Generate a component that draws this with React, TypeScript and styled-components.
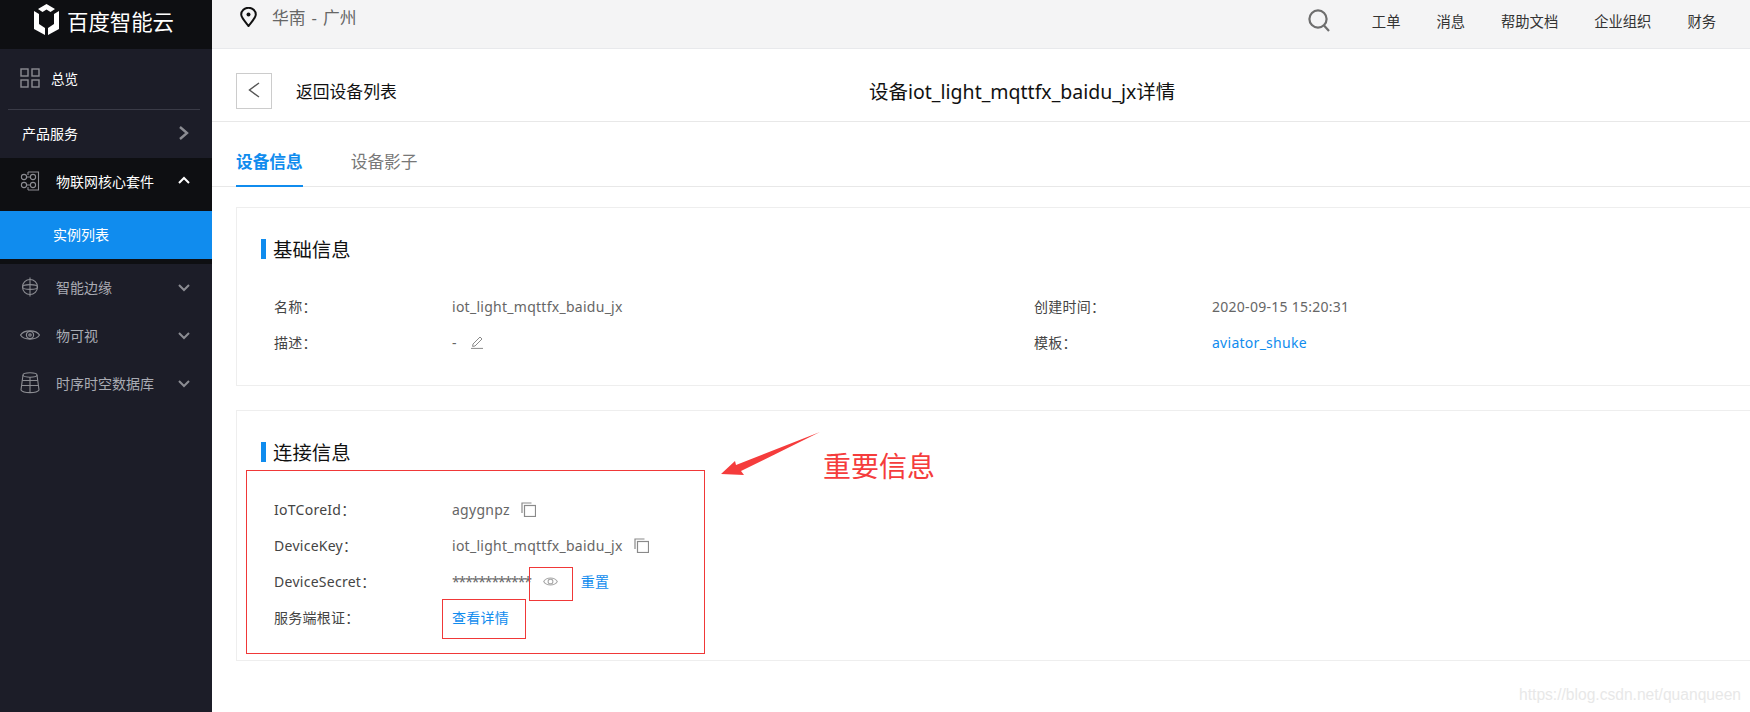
import React from 'react';
import styled, { createGlobalStyle } from 'styled-components';

const FONT = '"Noto Sans", "Noto Sans CJK SC", sans-serif';

const GlobalStyle = createGlobalStyle`
  html, body {
    margin: 0;
    padding: 0;
    background: #ffffff;
  }
  body {
    font-family: ${FONT};
  }
  * {
    box-sizing: border-box;
  }
`;

const Page = styled.div`
  position: relative;
  display: flex;
  width: 1750px;
  height: 712px;
  overflow: hidden;
  background: #ffffff;
`;

/* sidebar */
const Sidebar = styled.aside`
  flex: 0 0 212px;
  display: flex;
  flex-direction: column;
  background: #1c1d28;
`;

const LogoBar = styled.div`
  display: flex;
  align-items: center;
  gap: 6px;
  height: 49px;
  padding: 0 0 9px 32px;
  background: #0e0f12;
  color: #ffffff;
  font-size: 21.4px;
  font-weight: 400;
`;

const OverviewRow = styled.div`
  display: flex;
  align-items: center;
  gap: 11px;
  height: 60px;
  padding: 0 0 2px 20px;
  color: #ffffff;
  font-size: 13.5px;
`;

const Divider = styled.div`
  height: 1px;
  margin: 0 12px 0 8px;
  background: #3a3b47;
`;

const ServiceRow = styled.div`
  display: flex;
  align-items: center;
  justify-content: space-between;
  height: 48px;
  padding: 0 22px 2px;
  color: #ffffff;
  font-size: 14px;
`;

const OpenGroup = styled.div`
  padding-bottom: 5px;
  background: #0e0f12;
`;

const NavRow = styled.div<{ $open?: boolean }>`
  display: flex;
  align-items: center;
  height: 48px;
  margin-bottom: ${(p) => (p.$open ? '5px' : '0')};
  padding: 0 21px 3px 20px;
  color: ${(p) => (p.$open ? '#ffffff' : '#a9abb3')};
  font-size: 14px;
`;

const NavIcon = styled.span`
  display: flex;
  flex: 0 0 36px;
`;

const NavLabel = styled.span`
  flex: 1;
`;

const SubItem = styled.div`
  display: flex;
  align-items: center;
  height: 48px;
  padding: 0 0 2px 53px;
  background: #108cee;
  color: #ffffff;
  font-size: 14px;
`;

/* main column */
const Main = styled.div`
  flex: 1;
  display: flex;
  flex-direction: column;
  min-width: 0;
`;

const TopBar = styled.header`
  display: flex;
  align-items: center;
  height: 49px;
  padding: 0 34px 8px 28px;
  background: #f4f4f5;
  border-bottom: 1px solid #e8e9ec;
`;

const Region = styled.div`
  display: flex;
  align-items: center;
  flex: 1;
  gap: 15px;
  padding-bottom: 6px;
  color: #666666;
  font-size: 16.8px;
  word-spacing: 1.6px;
`;

const TopNav = styled.nav`
  display: flex;
  align-items: center;
  gap: 36px;
  color: #333333;
  font-size: 14.3px;
`;

const SearchIcon = styled.svg`
  margin-right: 6px;
`;

const HeaderRow = styled.div`
  display: grid;
  grid-template-columns: 633px auto;
  align-items: center;
  height: 73px;
  padding: 12px 0 0 24px;
  border-bottom: 1px solid #e8e8e8;
`;

const BackLink = styled.div`
  display: flex;
  align-items: center;
  gap: 24px;
  color: #111111;
  font-size: 16.8px;
`;

const BackButton = styled.div`
  display: flex;
  align-items: center;
  justify-content: center;
  width: 36px;
  height: 36px;
  padding-bottom: 3px;
  border: 1px solid #cccccc;
`;

const DetailTitle = styled.h1`
  margin: 0 0 2px;
  color: #111111;
  font-size: 19.5px;
  font-weight: 400;
`;

const Tabs = styled.div`
  display: flex;
  gap: 48px;
  height: 65px;
  padding-left: 24px;
  border-bottom: 1px solid #e8e8e8;
`;

const Tab = styled.div<{ $active?: boolean }>`
  display: flex;
  align-items: center;
  height: 65px;
  padding-top: 15px;
  border-bottom: 2px solid ${(p) => (p.$active ? '#108cee' : 'transparent')};
  color: ${(p) => (p.$active ? '#108cee' : '#777777')};
  font-size: 16.7px;
  font-weight: ${(p) => (p.$active ? 700 : 400)};
`;

const Content = styled.div`
  display: flex;
  flex-direction: column;
  gap: 24px;
  padding: 20px 0 0 24px;
`;

const Card = styled.section<{ $height: number }>`
  height: ${(p) => p.$height}px;
  padding: 31px 0 0 24px;
  border: 2px solid #eeeeee;
  border-width: 1px 0 1px 1px;
`;

const CardTitle = styled.h2`
  display: flex;
  align-items: center;
  height: 20px;
  margin: 0;
  padding-bottom: 2px;
  color: #111111;
  font-size: 19.4px;
  font-weight: 400;
  &::before {
    content: '';
    align-self: flex-start;
    width: 5px;
    height: 20px;
    margin-right: 7px;
    background: #108cee;
  }
`;

const InfoGrid = styled.div<{ $top: number; $columns: number }>`
  display: grid;
  grid-template-columns: repeat(${(p) => p.$columns}, 760px);
  grid-auto-rows: 36px;
  margin-top: ${(p) => p.$top}px;
  padding-left: 13px;
`;

const InfoItem = styled.div`
  display: flex;
  align-items: center;
  font-size: 14px;
  letter-spacing: 0.27px;
`;

const Label = styled.span`
  flex: 0 0 178px;
  color: #444444;
`;

const Value = styled.span`
  color: #666666;
`;

const SecretValue = styled(Value)`
  letter-spacing: -1.15px;
`;

const BlueLink = styled.a`
  color: #108cee;
`;

const ResetLink = styled(BlueLink)`
  margin-left: 23px;
`;

const SmallIcon = styled.svg<{ $gap: number }>`
  margin-left: ${(p) => p.$gap}px;
  flex: none;
`;

/* annotations drawn over the screenshot */
const RedBox = styled.div<{ $x: number; $y: number; $w: number; $h: number }>`
  position: absolute;
  left: ${(p) => p.$x}px;
  top: ${(p) => p.$y}px;
  width: ${(p) => p.$w}px;
  height: ${(p) => p.$h}px;
  border: 1px solid #f03838;
`;

const ArrowMark = styled.svg`
  position: absolute;
  left: 716px;
  top: 428px;
`;

const NoteText = styled.div`
  position: absolute;
  left: 823px;
  top: 446px;
  color: #f53c3c;
  font-size: 28px;
  line-height: 40px;
`;

const Watermark = styled.div`
  position: absolute;
  right: 9px;
  top: 686px;
  color: #e8e8e8;
  font-family: 'Liberation Sans', sans-serif;
  font-size: 15.6px;
`;

const LogoIcon = () => (
  <svg width="29" height="32" viewBox="0 0 29 32">
    <path d="M14.5 0 L23 5 L18.5 8 L14.5 5.6 L10.5 8 L6 5 Z" fill="#fff" />
    <path d="M2 7 L7 10 L7 20 L13 24 L13 31 L2 25 Z" fill="#fff" />
    <path d="M27 7 L22 10 L22 20 L16 24 L16 31 L27 25 Z" fill="#fff" />
  </svg>
);

const GridIcon = () => (
  <svg width="20" height="20" viewBox="0 0 20 20" fill="none" stroke="#8b8c92" strokeWidth="1.4">
    <rect x="1" y="1" width="7" height="7" />
    <rect x="12" y="1" width="7" height="7" />
    <rect x="1" y="12" width="7" height="7" />
    <rect x="12" y="12" width="7" height="7" />
  </svg>
);

const CoreIcon = () => (
  <svg width="20" height="20" viewBox="0 0 20 20" fill="none" stroke="#8b8c92" strokeWidth="1.1">
    <path d="M8 1 H18.5 V19 H8 M8 1 V4 M8 16 V19" />
    <circle cx="4" cy="6" r="2.6" />
    <circle cx="4" cy="14" r="2.6" />
    <circle cx="13" cy="6" r="2.6" />
    <circle cx="13" cy="14" r="2.6" />
    <path d="M6.6 6 H10.4 M6.6 14 H10.4" />
  </svg>
);

const EdgeIcon = () => (
  <svg width="20" height="20" viewBox="0 0 20 20" fill="none" stroke="#8b8c92" strokeWidth="1.1">
    <circle cx="10" cy="10" r="7.5" />
    <ellipse cx="10" cy="10" rx="7.5" ry="2.4" />
    <path d="M10 0.5 V19.5" />
  </svg>
);

const ViewIcon = () => (
  <svg width="20" height="20" viewBox="0 0 20 20" fill="none" stroke="#8b8c92" strokeWidth="1.2">
    <path d="M0.5 10 C4 4.5 16 4.5 19.5 10 C16 15.5 4 15.5 0.5 10 Z" />
    <circle cx="10" cy="10" r="3.6" />
    <circle cx="10" cy="10" r="1.2" />
  </svg>
);

const DatabaseIcon = () => (
  <svg width="20" height="22" viewBox="0 0 20 22" fill="none" stroke="#8b8c92" strokeWidth="1.1">
    <ellipse cx="10" cy="3" rx="7" ry="2.2" />
    <path d="M3 3 L1 18 C3 21.5 17 21.5 19 18 L17 3" />
    <path d="M2.3 8.5 H17.7 M1.6 13.5 H18.4 M10 5 V20" />
  </svg>
);

const Chevron = ({ dir, color, width = 2 }: { dir: 'up' | 'down' | 'right'; color: string; width?: number }) => {
  const d = dir === 'up' ? 'M2 9 L7 4 L12 9' : dir === 'down' ? 'M2 5 L7 10 L12 5' : 'M4 1 L11 7 L4 13';
  return (
    <svg width="14" height="14" viewBox="0 0 14 14" fill="none" stroke={color} strokeWidth={width}>
      <path d={d} />
    </svg>
  );
};

const CopyIcon = ({ gap }: { gap: number }) => (
  <SmallIcon $gap={gap} width="15" height="15" viewBox="0 0 15 15" fill="none" stroke="#8a8a8a" strokeWidth="1.2">
    <path d="M10.5 1 H1 V11" />
    <rect x="3.5" y="3.5" width="11" height="11" />
  </SmallIcon>
);

const navItems = [
  { label: '智能边缘', icon: <EdgeIcon /> },
  { label: '物可视', icon: <ViewIcon /> },
  { label: '时序时空数据库', icon: <DatabaseIcon /> },
];

export default function App() {
  return (
    <Page>
      <GlobalStyle />
      <Sidebar>
        <LogoBar>
          <LogoIcon />
          <span>百度智能云</span>
        </LogoBar>
        <OverviewRow>
          <GridIcon />
          <span>总览</span>
        </OverviewRow>
        <Divider />
        <ServiceRow>
          <span>产品服务</span>
          <Chevron dir="right" color="#8b8c92" width={2.4} />
        </ServiceRow>
        <OpenGroup>
          <NavRow $open>
            <NavIcon>
              <CoreIcon />
            </NavIcon>
            <NavLabel>物联网核心套件</NavLabel>
            <Chevron dir="up" color="#ffffff" />
          </NavRow>
          <SubItem>实例列表</SubItem>
        </OpenGroup>
        {navItems.map((item) => (
          <NavRow key={item.label}>
            <NavIcon>{item.icon}</NavIcon>
            <NavLabel>{item.label}</NavLabel>
            <Chevron dir="down" color="#8b8c92" />
          </NavRow>
        ))}
      </Sidebar>

      <Main>
        <TopBar>
          <Region>
            <svg width="17" height="20" viewBox="0 0 17 20" fill="none" stroke="#111" strokeWidth="2">
              <path d="M8.5 19 C4 13.5 1.2 10.5 1.2 7.6 A7.3 6.8 0 0 1 15.8 7.6 C15.8 10.5 13 13.5 8.5 19 Z" />
              <circle cx="8.5" cy="7.5" r="2" fill="#111" stroke="none" />
            </svg>
            <span>华南 - 广州</span>
          </Region>
          <TopNav>
            <SearchIcon width="22" height="23" viewBox="0 0 22 23" fill="none" stroke="#6e6e6e" strokeWidth="2.2">
              <circle cx="10" cy="10" r="8.6" />
              <path d="M16 16.5 L21 22" />
            </SearchIcon>
            <span>工单</span>
            <span>消息</span>
            <span>帮助文档</span>
            <span>企业组织</span>
            <span>财务</span>
          </TopNav>
        </TopBar>

        <HeaderRow>
          <BackLink>
            <BackButton>
              <svg width="12" height="16" viewBox="0 0 12 16" fill="none" stroke="#555" strokeWidth="1.4">
                <path d="M11 1 L1.5 8 L11 15" />
              </svg>
            </BackButton>
            <span>返回设备列表</span>
          </BackLink>
          <DetailTitle>设备iot_light_mqttfx_baidu_jx详情</DetailTitle>
        </HeaderRow>

        <Tabs>
          <Tab $active>设备信息</Tab>
          <Tab>设备影子</Tab>
        </Tabs>

        <Content>
          <Card $height={179}>
            <CardTitle>基础信息</CardTitle>
            <InfoGrid $top={29} $columns={2}>
              <InfoItem>
                <Label>名称：</Label>
                <Value>iot_light_mqttfx_baidu_jx</Value>
              </InfoItem>
              <InfoItem>
                <Label>创建时间：</Label>
                <Value>2020-09-15 15:20:31</Value>
              </InfoItem>
              <InfoItem>
                <Label>描述：</Label>
                <Value>-</Value>
                <SmallIcon $gap={13} width="14" height="14" viewBox="0 0 14 14" fill="none" stroke="#8a8a8a" strokeWidth="1">
                  <path d="M3 9 L10 2 L12 4 L5 11 L2.6 11.4 Z M1 13.4 H13" />
                </SmallIcon>
              </InfoItem>
              <InfoItem>
                <Label>模板：</Label>
                <BlueLink>aviator_shuke</BlueLink>
              </InfoItem>
            </InfoGrid>
          </Card>

          <Card $height={251}>
            <CardTitle>连接信息</CardTitle>
            <InfoGrid $top={29} $columns={1}>
              <InfoItem>
                <Label>IoTCoreId：</Label>
                <Value>agygnpz</Value>
                <CopyIcon gap={11} />
              </InfoItem>
              <InfoItem>
                <Label>DeviceKey：</Label>
                <Value>iot_light_mqttfx_baidu_jx</Value>
                <CopyIcon gap={11} />
              </InfoItem>
              <InfoItem>
                <Label>DeviceSecret：</Label>
                <SecretValue>************</SecretValue>
                <SmallIcon $gap={12} width="15" height="11" viewBox="0 0 15 11" fill="none" stroke="#a8a8a8" strokeWidth="1.1">
                  <path d="M0.7 5.5 C3.5 0.8 11.5 0.8 14.3 5.5 C11.5 10.2 3.5 10.2 0.7 5.5 Z" />
                  <circle cx="7.5" cy="5.5" r="2.4" />
                </SmallIcon>
                <ResetLink>重置</ResetLink>
              </InfoItem>
              <InfoItem>
                <Label>服务端根证：</Label>
                <BlueLink>查看详情</BlueLink>
              </InfoItem>
            </InfoGrid>
          </Card>
        </Content>
      </Main>

      <RedBox $x={246} $y={470} $w={459} $h={184} />
      <RedBox $x={529} $y={567} $w={44} $h={34} />
      <RedBox $x={442} $y={599} $w={84} $h={40} />
      <ArrowMark width="110" height="52" viewBox="716 428 110 52">
        <path d="M721 474 L735 461 L736 465 L820 432 L741 471 L744 475 Z" fill="#f53c3c" />
      </ArrowMark>
      <NoteText>重要信息</NoteText>
      <Watermark>https://blog.csdn.net/quanqueen</Watermark>
    </Page>
  );
}
